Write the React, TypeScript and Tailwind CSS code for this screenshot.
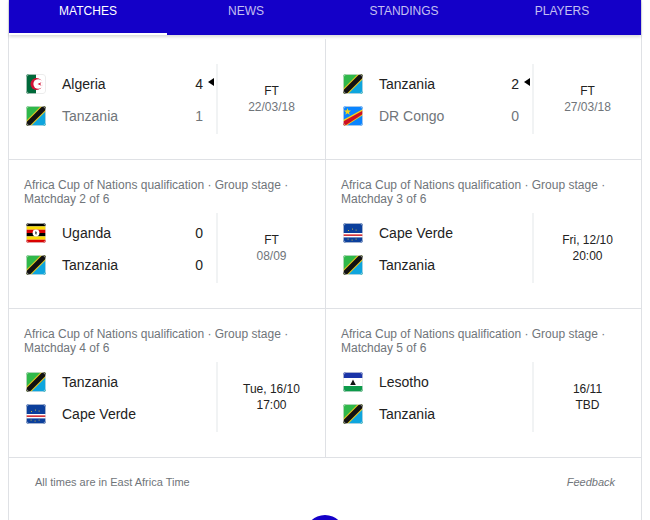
function Tanzania() {
    return (
        <svg viewBox="0 0 20 20" className="w-full h-full">
            <rect width="20" height="20" fill="#2fb84a"/>
            <polygon points="20,0 20,20 0,20" fill="#0ea5dd"/>
            <polygon points="0,20 0,15 15,0 20,0 20,5 5,20" fill="#e8c81e"/>
            <polygon points="0,20 0,16.5 16.5,0 20,0 20,3.5 3.5,20" fill="#111"/>
        </svg>
    )
}

function Algeria() {
    return (
        <svg viewBox="0 0 20 20" className="w-full h-full">
            <rect width="20" height="20" fill="#fff"/>
            <rect width="10" height="20" fill="#00693a"/>
            <circle cx="10.5" cy="10" r="6" fill="#d21034"/>
            <circle cx="12.2" cy="10" r="4.8" fill="#fff"/>
            <polygon points="11.5,10 15.5,8.3 14.2,10 15.5,11.7" fill="#d21034"/>
        </svg>
    )
}

function Congo() {
    return (
        <svg viewBox="0 0 20 20" className="w-full h-full">
            <rect width="20" height="20" fill="#0a84ff"/>
            <polygon points="0,20 0,14 20,3 20,9 3,20" fill="#f7d618"/>
            <polygon points="0,19 0,15.5 20,4.5 20,8 1.5,20" fill="#ce1021"/>
            <polygon points="4.5,2 5.4,4.5 8,4.6 6,6.2 6.7,8.8 4.5,7.3 2.3,8.8 3,6.2 1,4.6 3.6,4.5" fill="#f7d618"/>
        </svg>
    )
}

function Uganda() {
    return (
        <svg viewBox="0 0 20 20" className="w-full h-full">
            <rect width="20" height="3.4" fill="#000"/>
            <rect y="3.4" width="20" height="3.3" fill="#fcdc04"/>
            <rect y="6.7" width="20" height="3.3" fill="#d90000"/>
            <rect y="10" width="20" height="3.4" fill="#000"/>
            <rect y="13.4" width="20" height="3.3" fill="#fcdc04"/>
            <rect y="16.7" width="20" height="3.3" fill="#d90000"/>
            <circle cx="10" cy="10" r="3.4" fill="#fff"/>
            <path d="M9 8.2 L11 9 L10.4 11.8 L9.2 11 Z" fill="#555"/>
        </svg>
    )
}

function CapeVerde() {
    return (
        <svg viewBox="0 0 20 20" className="w-full h-full">
            <rect width="20" height="20" fill="#0b3f9c"/>
            <rect y="10" width="20" height="4.4" fill="#fff"/>
            <rect y="11.4" width="20" height="1.5" fill="#cf2027"/>
            <g fill="#c9b23a">
                <rect x="5" y="7" width="1" height="1"/>
                <rect x="9" y="5.6" width="1" height="1"/>
                <rect x="12.6" y="6.6" width="1" height="1"/>
                <rect x="4.6" y="15.6" width="1" height="1"/>
                <rect x="8.6" y="16.6" width="1" height="1"/>
                <rect x="12.6" y="15.6" width="1" height="1"/>
            </g>
        </svg>
    )
}

function Lesotho() {
    return (
        <svg viewBox="0 0 20 20" className="w-full h-full">
            <rect width="20" height="20" fill="#fff"/>
            <rect width="20" height="6" fill="#1a34a8"/>
            <rect y="14" width="20" height="6" fill="#0d9a4a"/>
            <polygon points="10,7.5 12.8,13 7.2,13" fill="#111"/>
        </svg>
    )
}

const flags: Record<string, () => React.JSX.Element> = {
    "Tanzania": Tanzania,
    "Algeria": Algeria,
    "DR Congo": Congo,
    "Uganda": Uganda,
    "Cape Verde": CapeVerde,
    "Lesotho": Lesotho,
};

type Team = { name: string, score?: number, lost?: boolean, won?: boolean };

function TeamRow({ team }: { team: Team }) {
    const Flag = flags[team.name];
    return (
        <div className={`flex items-center h-8 text-sm ${team.lost ? "text-[#70757a]" : "text-[#222]"}`}>
            <div className="relative w-5 h-5 rounded-[3px] overflow-hidden ml-0.5 shrink-0">
                <Flag/>
                <div className="absolute inset-0 rounded-[3px] border border-[#e4e4e4]/70"></div>
            </div>
            <span className="ml-4 flex-1">{team.name}</span>
            {team.score !== undefined && <span>{team.score}</span>}
            <div className="w-[13px] flex justify-end pr-0.5 mb-1">
                {team.won && (
                    <svg width="6" height="8" viewBox="0 0 6 8"><polygon points="6,0 6,8 0,4" fill="#000"/></svg>
                )}
            </div>
        </div>
    )
}

type Match = {
    header?: string,
    home: Team,
    away: Team,
    top: string,
    bottom: string,
    muted?: boolean,
};

const matches: Match[] = [
    {
        home: { name: "Algeria", score: 4, won: true },
        away: { name: "Tanzania", score: 1, lost: true },
        top: "FT", bottom: "22/03/18", muted: true,
    },
    {
        home: { name: "Tanzania", score: 2, won: true },
        away: { name: "DR Congo", score: 0, lost: true },
        top: "FT", bottom: "27/03/18", muted: true,
    },
    {
        header: "Matchday 2 of 6",
        home: { name: "Uganda", score: 0 },
        away: { name: "Tanzania", score: 0 },
        top: "FT", bottom: "08/09", muted: true,
    },
    {
        header: "Matchday 3 of 6",
        home: { name: "Cape Verde" },
        away: { name: "Tanzania" },
        top: "Fri, 12/10", bottom: "20:00",
    },
    {
        header: "Matchday 4 of 6",
        home: { name: "Tanzania" },
        away: { name: "Cape Verde" },
        top: "Tue, 16/10", bottom: "17:00",
    },
    {
        header: "Matchday 5 of 6",
        home: { name: "Lesotho" },
        away: { name: "Tanzania" },
        top: "16/11", bottom: "TBD",
    },
];

function MatchCell({ match, index }: { match: Match, index: number }) {
    const left = index % 2 === 0;
    return (
        <div className={`border-b border-[#dfe1e5] pl-[15px] ${left ? "border-r" : ""} ${match.header ? "pt-[18px] pb-[25px]" : "pt-[25px] pb-[25px]"}`}>
            {match.header && (
                <div className="text-xs leading-[14px] text-[#70757a] mb-[7px]">
                    Africa Cup of Nations qualification · Group stage ·<br/>{match.header}
                </div>
            )}
            <div className="flex h-[70px]">
                <div className="flex-1 pt-1">
                    <TeamRow team={match.home}/>
                    <TeamRow team={match.away}/>
                </div>
                <div className="w-[109px] shrink-0 border-l-2 border-[#f1f3f4] flex flex-col items-center justify-center text-xs leading-4 text-[#222]">
                    <span>{match.top}</span>
                    <span className={match.muted ? "text-[#70757a]" : ""}>{match.bottom}</span>
                </div>
            </div>
        </div>
    )
}

const tabs = ["Matches", "News", "Standings", "Players"];

export default function App() {
    return (
        <div className="w-[650px] h-[520px] overflow-hidden bg-white font-['Liberation_Sans',Arial,sans-serif]">
            <div className="ml-2 w-[634px] border-x border-[#dfe1e5] min-h-[520px]">
                <ul className="flex h-[35px] bg-[#1400c8] shadow-[0_2px_3px_rgba(0,0,0,0.15)]">
                    {tabs.map((tab, i) => (
                        <li key={tab} className={`w-1/4 text-center uppercase text-xs leading-[22px] ${i === 0 ? "text-white border-b-2 border-white" : "text-white/75"}`}>
                            {tab}
                        </li>
                    ))}
                </ul>
                <div className="grid grid-cols-[317px_315px] mt-1">
                    {matches.map((m, i) => <MatchCell key={i} match={m} index={i}/>)}
                </div>
                <div className="flex justify-between px-[26px] pt-[17px] text-[11px] leading-[14px] text-[#70757a]">
                    <span>All times are in East Africa Time</span>
                    <span className="italic">Feedback</span>
                </div>
                <div className="w-10 h-10 rounded-full bg-[#1400c8] mx-auto mt-[26px]"></div>
            </div>
        </div>
    )
}
